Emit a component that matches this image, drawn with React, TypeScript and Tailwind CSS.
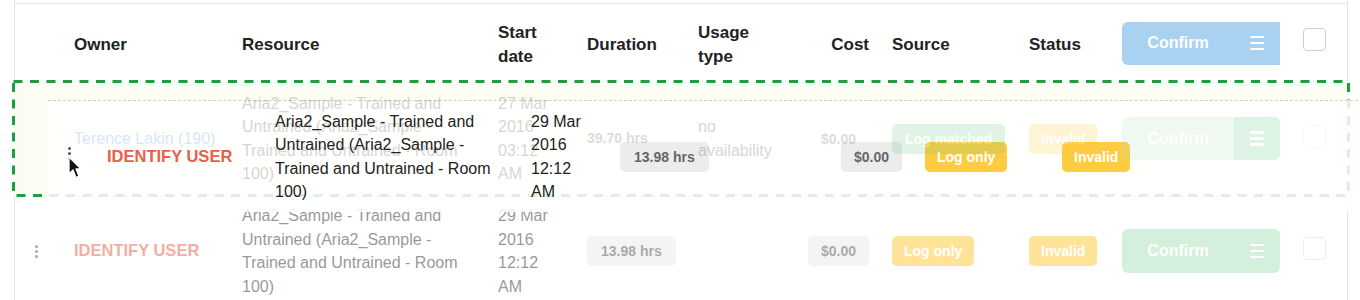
import React from "react";

const GRID =
  "grid grid-cols-[59px_168px_256px_89px_111px_102px_69px_23px_137px_93px_158px_23px_23px_1fr] items-center";

const RESOURCE =
  "Aria2_Sample - Trained and Untrained (Aria2_Sample - Trained and Untrained - Room 100)";

function Handle({ className = "" }: { className?: string }) {
  return (
    <div className={`flex w-[43px] flex-col items-center gap-[2px] ${className}`}>
      <span className="h-[3px] w-[3px] rounded-full bg-[#555]" />
      <span className="h-[3px] w-[3px] rounded-full bg-[#555]" />
      <span className="h-[3px] w-[3px] rounded-full bg-[#555]" />
    </div>
  );
}

function Pill({
  children,
  className,
}: {
  children: React.ReactNode;
  className: string;
}) {
  return (
    <span
      className={`inline-flex h-[30px] items-center rounded-[5px] text-[14px] font-bold leading-none ${className}`}
    >
      {children}
    </span>
  );
}

function MenuIcon() {
  return (
    <span className="flex flex-col gap-[3.5px]">
      <span className="h-[2.5px] w-[14px] rounded-full bg-white" />
      <span className="h-[2.5px] w-[14px] rounded-full bg-white" />
      <span className="h-[2.5px] w-[14px] rounded-full bg-white" />
    </span>
  );
}

function ConfirmButton({ variant }: { variant: "header" | "green" | "split" }) {
  const shell =
    variant === "header"
      ? "h-[43px] rounded-l-[6px] bg-[#a9d1f1] mt-[2px]"
      : variant === "green"
        ? "h-[44px] rounded-[6px] bg-[#abe1bb]"
        : "h-[43px] rounded-[6px] bg-[#b4e6c3] overflow-hidden";
  return (
    <div className={`flex w-[158px] text-[16px] font-bold text-white ${shell}`}>
      <span className="flex w-[112px] items-center justify-center">Confirm</span>
      <span
        className={`flex flex-1 items-center justify-center ${
          variant === "split" ? "bg-[#5cc98a]" : ""
        }`}
      >
        <MenuIcon />
      </span>
    </div>
  );
}

function Checkbox({ border }: { border: string }) {
  return (
    <span
      className={`-mt-[5px] block h-[23px] w-[23px] rounded-[4px] border-[1.5px] bg-white ${border}`}
    />
  );
}

function Cursor() {
  return (
    <svg width="14" height="24" viewBox="0 0 14 24" className="block">
      <path
        d="M1 1 L1 18 L5 14 L8 21.5 L11 20.2 L8 13 L13 13 Z"
        fill="#111"
        stroke="#fff"
        strokeWidth="1.3"
        strokeLinejoin="round"
      />
    </svg>
  );
}

// dashed drop target outline
function DropOutline() {
  return (
    <svg
      width="1338"
      height="117"
      className="absolute -left-[3px] top-0 block"
    >
      <rect
        x="1.5"
        y="1.5"
        width="1335"
        height="114"
        fill="#fcfdf2"
        stroke="#1f9e40"
        strokeWidth="3"
        strokeDasharray="9 7.5"
      />
    </svg>
  );
}

export default function App() {
  return (
    <div className="h-[300px] w-[1360px] overflow-hidden bg-white font-['Liberation_Sans',Arial,sans-serif] text-[16px]">
      <div className="relative ml-[14px] w-[1334px] border-x border-[#e4e4e4]">
        <div className="h-[4px] border-b border-[#e4e4e4]" />

        {/* header */}
        <div className={`${GRID} h-[76px] text-[17px] font-bold leading-[24px] text-[#222]`}>
          <div />
          <div className="pt-[5px]">Owner</div>
          <div className="pt-[5px]">Resource</div>
          <div className="w-[60px] pt-[5px]">Start date</div>
          <div className="pt-[5px]">Duration</div>
          <div className="w-[60px] pt-[5px]">Usage type</div>
          <div className="pt-[5px] text-right">Cost</div>
          <div />
          <div className="pt-[5px]">Source</div>
          <div className="pt-[5px]">Status</div>
          <ConfirmButton variant="header" />
          <div />
          <Checkbox border="border-[#cfcfcf]" />
          <div />
        </div>

        {/* drop placeholder with the row being replaced */}
        <div className="relative h-[117px]">
          <DropOutline />
          <div className={`${GRID} relative z-20 h-full leading-[23.5px] text-[#333] opacity-20`}>
            <div />
            <div className="text-[#3d85d8]">Terence Lakin (190)</div>
            <div className="w-[240px]">{RESOURCE}</div>
            <div className="w-[60px]">27 Mar 2016 03:12 AM</div>
            <div className="text-[14px] font-bold text-[#555]">39.70 hrs</div>
            <div className="w-[90px]">no availability</div>
            <div className="flex justify-end">
              <Pill className="px-[13px] text-[#555]">$0.00</Pill>
            </div>
            <div />
            <div>
              <Pill className="bg-[#6cc785] px-[13px] text-white">Log matched</Pill>
            </div>
            <div>
              <Pill className="bg-[#ffc841] px-3 text-white">Invalid</Pill>
            </div>
            <ConfirmButton variant="split" />
            <div />
            <Checkbox border="border-[#ddd]" />
            <div />
          </div>
        </div>

        {/* dragged row preview */}
        <div className="absolute left-[33px] top-[100px] z-10 h-[112px] w-[1340px] border-t border-dashed border-[#cfcfcf] bg-white/85">
          <div className={`${GRID} h-full leading-[23.5px] text-[#222]`}>
            <Handle className="-mt-[6px]" />
            <div className="text-[16.5px] font-bold text-[#e8604a]">IDENTIFY USER</div>
            <div className="w-[240px]">{RESOURCE}</div>
            <div className="w-[60px]">29 Mar 2016 12:12 AM</div>
            <div>
              <Pill className="bg-[#ececec] px-[14px] text-[#666]">13.98 hrs</Pill>
            </div>
            <div />
            <div className="flex justify-end">
              <Pill className="bg-[#ececec] px-[13px] text-[#666]">$0.00</Pill>
            </div>
            <div />
            <div>
              <Pill className="bg-[#ffcb40] px-3 text-white">Log only</Pill>
            </div>
            <div>
              <Pill className="bg-[#ffcb40] px-3 text-white">Invalid</Pill>
            </div>
          </div>
        </div>

        <div className="absolute left-[53px] top-[156px] z-30">
          <Cursor />
        </div>

        {/* next row */}
        <div className={`${GRID} h-[108px] leading-[23.5px] text-[#333] opacity-50`}>
          <Handle />
          <div className="text-[16.5px] font-bold text-[#e8604a]">IDENTIFY USER</div>
          <div className="w-[240px]">{RESOURCE}</div>
          <div className="w-[60px]">29 Mar 2016 12:12 AM</div>
          <div>
            <Pill className="bg-[#ebebeb] px-[14px] text-[#555]">13.98 hrs</Pill>
          </div>
          <div />
          <div className="flex justify-end">
            <Pill className="bg-[#ebebeb] px-[13px] text-[#555]">$0.00</Pill>
          </div>
          <div />
          <div>
            <Pill className="bg-[#ffc933] px-3 text-white">Log only</Pill>
          </div>
          <div>
            <Pill className="bg-[#ffc933] px-3 text-white">Invalid</Pill>
          </div>
          <ConfirmButton variant="green" />
          <div />
          <Checkbox border="border-[#ddd]" />
          <div />
        </div>
      </div>
    </div>
  );
}
